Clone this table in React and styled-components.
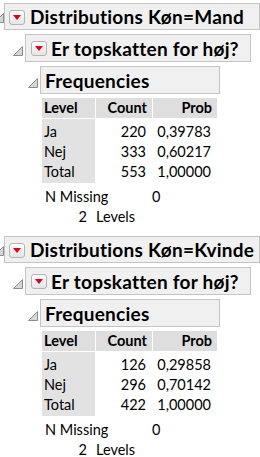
import React from 'react';
import styled, { createGlobalStyle } from 'styled-components';

const GlobalStyle = createGlobalStyle`
  body {
    margin: 0;
    background: #fff;
    font-family: Lato, "Noto Sans", sans-serif;
    color: #000;
  }
`;

const Page = styled.div`
  display: flex;
  flex-direction: column;
  padding-top: 3px;
  overflow: hidden;
  width: 260px;
`;

const Block = styled.div`
  display: flex;
  flex-direction: column;
  gap: 4px;
  margin-bottom: 9px;
`;

const OutlineRow = styled.div`
  display: flex;
  align-items: center;
  padding-left: ${(p) => p.$indent}px;
`;

const Disclosure = styled.svg`
  flex: none;
  margin-right: ${(p) => p.$gap}px;
  margin-top: ${(p) => p.$drop}px;
`;

const TitleBox = styled.div`
  box-sizing: border-box;
  display: flex;
  align-items: center;
  gap: ${(p) => p.$gap}px;
  width: ${(p) => p.$width}px;
  height: ${(p) => p.$height}px;
  padding-left: ${(p) => p.$pad}px;
  background: #f0f0f0;
  border: 1px solid #c4c4c4;
  font-size: 19px;
  letter-spacing: 0.25px;
  font-weight: 700;
  white-space: nowrap;
`;

const MenuButton = styled.div`
  box-sizing: border-box;
  flex: none;
  width: 16px;
  height: 15px;
  border: 1px solid #b4b4b4;
  border-radius: 3px;
  background: linear-gradient(#ffffff, #e4e4e4);
  display: flex;
  align-items: center;
  justify-content: center;
  margin-top: 1px;
`;

const RedArrow = styled.div`
  width: 0;
  height: 0;
  border-left: 4px solid transparent;
  border-right: 4px solid transparent;
  border-top: 5px solid #e0001b;
`;

const Table = styled.div`
  display: flex;
  gap: 1px;
  margin-left: 42px;
  font-size: 14.5px;
`;

const Column = styled.div`
  display: flex;
  flex-direction: column;
  gap: 1px;
  width: ${(p) => p.$width}px;
`;

const HeadCell = styled.div`
  height: 20px;
  line-height: 20px;
  background: #dedede;
  font-weight: 700;
  text-align: ${(p) => (p.$right ? 'right' : 'left')};
  padding: ${(p) => (p.$right ? '0 5px 0 0' : '0 0 0 2px')};
`;

const ColumnBody = styled.div`
  display: flex;
  flex-direction: column;
  padding: 3px 0 1px;
  background: ${(p) => (p.$shaded ? '#e2e2e2' : '#fff')};
`;

const BodyCell = styled.div`
  height: 20px;
  line-height: 20px;
  text-align: ${(p) => (p.$right ? 'right' : 'left')};
  padding: ${(p) => (p.$right ? '0 6px 0 0' : '0 0 0 2px')};
`;

const Summary = styled.div`
  display: flex;
  flex-direction: column;
  margin-left: 45px;
  font-size: 14.5px;
  line-height: 20px;
`;

const SummaryRow = styled.div`
  display: flex;
`;

const SummaryLabel = styled.span`
  width: 107px;
`;

const LevelCount = styled.span`
  width: 42px;
  text-align: right;
  margin-right: 9px;
`;

const Triangle = ({ clip }) =>
  clip ? (
    <Disclosure width="4" height="10" viewBox="6 0 4 10" $gap={0} $drop={2}>
      <polygon points="0.5,9.5 9.5,0.5 9.5,9.5" fill="#d6d6d6" stroke="#8c8c8c" />
    </Disclosure>
  ) : (
    <Disclosure width="10" height="10" viewBox="0 0 10 10" $gap={2} $drop={6}>
      <polygon points="0.5,9.5 9.5,0.5 9.5,9.5" fill="#d6d6d6" stroke="#8c8c8c" />
    </Disclosure>
  );

const columns = [
  { key: 'level', title: 'Level', width: 53, right: false, shaded: true },
  { key: 'count', title: 'Count', width: 56, right: true, shaded: false },
  { key: 'prob', title: 'Prob', width: 64, right: true, shaded: false },
];

const FrequencyTable = ({ rows }) => (
  <Table>
    {columns.map((c) => (
      <Column key={c.key} $width={c.width}>
        <HeadCell $right={c.right}>{c.title}</HeadCell>
        <ColumnBody $shaded={c.shaded}>
          {rows.map((r) => (
            <BodyCell key={r.level} $right={c.right}>
              {r[c.key]}
            </BodyCell>
          ))}
        </ColumnBody>
      </Column>
    ))}
  </Table>
);

const Distribution = ({ group, rows }) => (
  <Block>
    <OutlineRow $indent={0}>
      <Triangle clip />
      <TitleBox $width={256} $height={27} $pad={4} $gap={5}>
        <MenuButton>
          <RedArrow />
        </MenuButton>
        Distributions Køn={group}
      </TitleBox>
    </OutlineRow>
    <OutlineRow $indent={13}>
      <Triangle />
      <TitleBox $width={226} $height={28} $pad={5} $gap={4}>
        <MenuButton>
          <RedArrow />
        </MenuButton>
        Er topskatten for høj?
      </TitleBox>
    </OutlineRow>
    <OutlineRow $indent={28}>
      <Triangle />
      <TitleBox $width={180} $height={28} $pad={4} $gap={0}>
        Frequencies
      </TitleBox>
    </OutlineRow>
    <FrequencyTable rows={rows} />
    <Summary>
      <SummaryRow>
        <SummaryLabel>N Missing</SummaryLabel>
        <span>0</span>
      </SummaryRow>
      <SummaryRow>
        <LevelCount>2</LevelCount>
        <span>Levels</span>
      </SummaryRow>
    </Summary>
  </Block>
);

const data = [
  {
    group: 'Mand',
    rows: [
      { level: 'Ja', count: 220, prob: '0,39783' },
      { level: 'Nej', count: 333, prob: '0,60217' },
      { level: 'Total', count: 553, prob: '1,00000' },
    ],
  },
  {
    group: 'Kvinde',
    rows: [
      { level: 'Ja', count: 126, prob: '0,29858' },
      { level: 'Nej', count: 296, prob: '0,70142' },
      { level: 'Total', count: 422, prob: '1,00000' },
    ],
  },
];

export default function App() {
  return (
    <>
      <GlobalStyle />
      <Page>
        {data.map((d) => (
          <Distribution key={d.group} group={d.group} rows={d.rows} />
        ))}
      </Page>
    </>
  );
}
